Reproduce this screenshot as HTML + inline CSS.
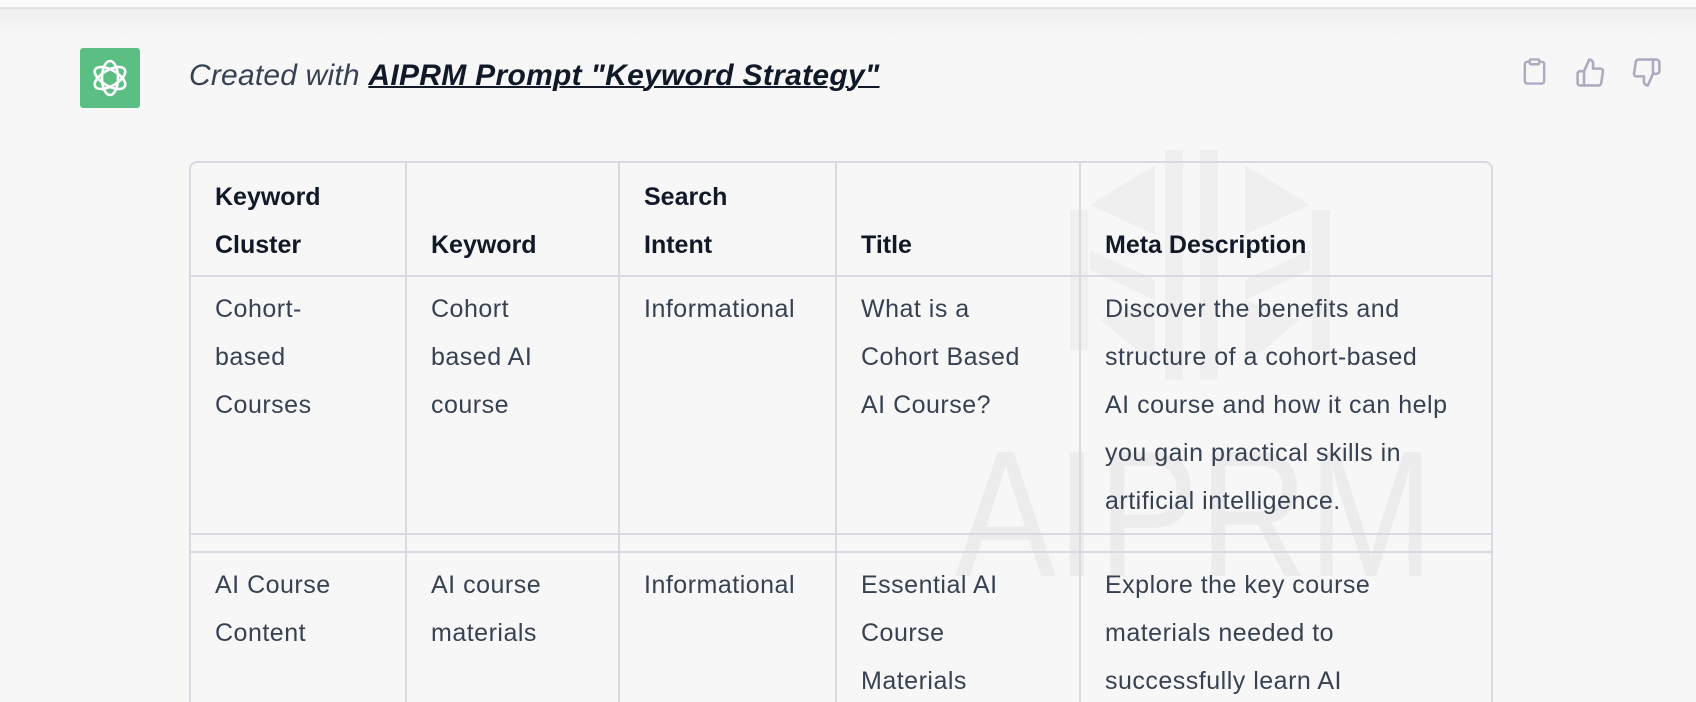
<!DOCTYPE html>
<html><head><meta charset="utf-8"><style>
html,body{margin:0;padding:0;width:1696px;height:702px;overflow:hidden;background:#f7f7f8;font-family:"Liberation Sans",sans-serif;}
#w{position:relative;width:1696px;height:702px;overflow:hidden;}
.topbar{position:absolute;left:0;top:0;width:1696px;height:7px;background:#fafafa;border-bottom:2px solid #e3e3e6;}
.grad{position:absolute;left:0;top:9px;width:1696px;height:30px;background:linear-gradient(#efefef,#f7f7f8);}
.logo{position:absolute;left:80px;top:48px;width:60px;height:60px;background:#5bbf83;border-radius:3px;}
.title{position:absolute;left:189px;top:59px;font-size:30px;font-style:italic;color:#374151;letter-spacing:0.2px;}
.title a{color:#111827;font-weight:bold;text-decoration:underline;text-decoration-thickness:2px;letter-spacing:0.3px;}
.icons svg{position:absolute;top:57px;}
.wm{position:absolute;left:955px;top:425px;font-size:180px;color:#ececed;line-height:180px;transform:scaleX(0.84);transform-origin:0 0;}
table{position:absolute;left:189px;top:161px;border-collapse:separate;border-spacing:0;table-layout:fixed;width:1304px;border:2px solid #d9d9e3;border-radius:8px;font-size:25px;letter-spacing:0.5px;color:#374151;}
td,th{border-right:2px solid #d9d9e3;border-bottom:2px solid #d9d9e3;padding:0 24px;line-height:48px;vertical-align:top;text-align:left;white-space:nowrap;}
tr td:last-child,tr th:last-child{border-right:none;}
th{color:#111827;font-weight:bold;vertical-align:bottom;padding-top:10px;padding-bottom:6px;letter-spacing:0;}
td{padding-top:8px;padding-bottom:8px;}
tr.e td{padding:0;height:16px;}
</style></head><body><div id="w">
<div class="topbar"></div><div class="grad"></div>
<div class="wm">AIPRM</div>
<svg style="position:absolute;left:1060px;top:150px" width="280" height="240" viewBox="0 0 280 240" fill="#efeff0"><polygon points="95,15 30,55 95,85"/><polygon points="185,15 250,55 185,85"/><rect x="105" y="0" width="18" height="230"/><rect x="140" y="0" width="18" height="230"/><polygon points="10,60 28,60 28,200 10,200"/><polygon points="252,60 270,60 270,200 252,200"/><polygon points="30,100 95,130 95,150 30,120"/><polygon points="250,100 185,130 185,150 250,120"/><polygon points="40,170 95,150 95,215"/><polygon points="240,170 185,150 185,215"/></svg>
<div class="logo"><svg width="60" height="60" viewBox="0 0 60 60" fill="none" stroke="#fff" stroke-width="2.6"><g transform="translate(30 30)"><ellipse rx="8" ry="17" transform="rotate(0)"/><ellipse rx="8" ry="17" transform="rotate(60)"/><ellipse rx="8" ry="17" transform="rotate(120)"/></g></svg></div>
<div class="title">Created with <a>AIPRM Prompt "Keyword Strategy"</a></div>
<div class="icons">
<svg style="left:1520px" width="29" height="29" viewBox="0 0 24 24" fill="none" stroke="#acacbe" stroke-width="2" stroke-linecap="round" stroke-linejoin="round"><path d="M16 4h2a2 2 0 0 1 2 2v14a2 2 0 0 1-2 2H6a2 2 0 0 1-2-2V6a2 2 0 0 1 2-2h2"/><rect x="8" y="2" width="8" height="4" rx="1"/></svg>
<svg style="left:1575px" width="31" height="31" viewBox="0 0 24 24" fill="none" stroke="#acacbe" stroke-width="2" stroke-linecap="round" stroke-linejoin="round"><path d="M14 9V5a3 3 0 0 0-3-3l-4 9v11h11.28a2 2 0 0 0 2-1.7l1.38-9a2 2 0 0 0-2-2.3zM7 22H4a2 2 0 0 1-2-2v-7a2 2 0 0 1 2-2h3"/></svg>
<svg style="left:1631px" width="31" height="31" viewBox="0 0 24 24" fill="none" stroke="#acacbe" stroke-width="2" stroke-linecap="round" stroke-linejoin="round"><path d="M10 15v4a3 3 0 0 0 3 3l4-9V2H5.72a2 2 0 0 0-2 1.7l-1.38 9a2 2 0 0 0 2 2.3zm7-13h2.67A2.31 2.31 0 0 1 22 4v7a2.31 2.31 0 0 1-2.33 2H17"/></svg>
</div>
<table>
<colgroup><col style="width:216px"><col style="width:213px"><col style="width:217px"><col style="width:244px"><col></colgroup>
<tr><th>Keyword<br>Cluster</th><th>Keyword</th><th>Search<br>Intent</th><th>Title</th><th>Meta Description</th></tr>
<tr><td>Cohort-<br>based<br>Courses</td><td>Cohort<br>based AI<br>course</td><td>Informational</td><td>What is a<br>Cohort Based<br>AI Course?</td><td>Discover the benefits and<br>structure of a cohort-based<br>AI course and how it can help<br>you gain practical skills in<br>artificial intelligence.</td></tr>
<tr class="e"><td></td><td></td><td></td><td></td><td></td></tr>
<tr><td>AI Course<br>Content</td><td>AI course<br>materials</td><td>Informational</td><td>Essential AI<br>Course<br>Materials</td><td>Explore the key course<br>materials needed to<br>successfully learn AI<br>and build practical skills.<br>&nbsp;</td></tr>
</table>
</div></body></html>
